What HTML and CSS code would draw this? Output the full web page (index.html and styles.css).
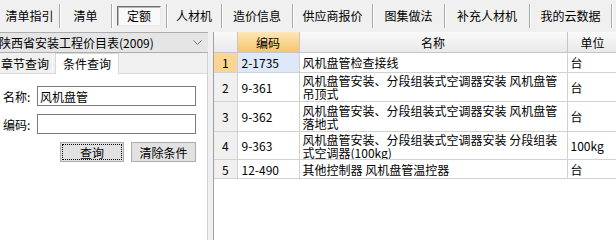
FILE: index.html
```html
<!DOCTYPE html>
<html lang="zh">
<head>
    <meta charset="UTF-8">
    <title>定额查询</title>
    <link rel="stylesheet" href="styles.css">
</head>
<body>
    <div class="toolbar">
        <div class="tool">清单指引</div>
        <div class="tool">清单</div>
        <div class="tool"><span class="pressed">定额</span></div>
        <div class="tool">人材机</div>
        <div class="tool">造价信息</div>
        <div class="tool">供应商报价</div>
        <div class="tool">图集做法</div>
        <div class="tool">补充人材机</div>
        <div class="tool">我的云数据</div>
    </div>

    <div class="main">
        <div class="side">
            <div class="combo">
                <span class="combo-text">陕西省安装工程价目表(2009)</span>
                <svg class="chevron" width="9" height="6" viewBox="0 0 9 6">
                    <polyline points="0.5,0.5 4.5,4.5 8.5,0.5" fill="none" stroke="#6d6d6d" stroke-width="1"/>
                </svg>
            </div>
            <div class="tabs">
                <div class="tab">章节查询</div>
                <div class="tab active">条件查询</div>
            </div>
            <div class="panel">
                <div class="field">
                    <label>名称:</label>
                    <input type="text" value="风机盘管">
                </div>
                <div class="field">
                    <label>编码:</label>
                    <input type="text">
                </div>
                <div class="buttons">
                    <button class="btn focused">查询</button>
                    <button class="btn">清除条件</button>
                </div>
            </div>
        </div>

        <div class="splitter"></div>

        <div class="grid">
            <table>
                <colgroup>
                    <col class="c-num">
                    <col class="c-code">
                    <col class="c-name">
                    <col class="c-unit">
                </colgroup>
                <tr class="head">
                    <th></th>
                    <th class="sorted">编码</th>
                    <th>名称</th>
                    <th>单位</th>
                </tr>
                <tr class="r1">
                    <td class="num current">1</td>
                    <td class="code selected">2-1735</td>
                    <td>风机盘管检查接线</td>
                    <td>台</td>
                </tr>
                <tr class="r2">
                    <td class="num">2</td>
                    <td class="code">9-361</td>
                    <td class="name">风机盘管安装、分段组装式空调器安装 风机盘管吊顶式</td>
                    <td>台</td>
                </tr>
                <tr class="r3">
                    <td class="num">3</td>
                    <td class="code">9-362</td>
                    <td class="name">风机盘管安装、分段组装式空调器安装 风机盘管落地式</td>
                    <td>台</td>
                </tr>
                <tr class="r4">
                    <td class="num">4</td>
                    <td class="code">9-363</td>
                    <td class="name">风机盘管安装、分段组装式空调器安装 分段组装式空调器(100kg)</td>
                    <td>100kg</td>
                </tr>
                <tr class="r5">
                    <td class="num">5</td>
                    <td class="code">12-490</td>
                    <td>其他控制器 风机盘管温控器</td>
                    <td>台</td>
                </tr>
            </table>
        </div>
    </div>
</body>
</html>
```

FILE: styles.css
```css
/* Estilos gerais */
body {
    margin: 0;
    padding: 0;
    width: 616px;
    height: 240px;
    overflow: hidden;
    font-family: "Noto Sans CJK SC", "Noto Sans", sans-serif;
    font-size: 12px;
    color: #000;
    background-color: #f0f0f0;
}

/* Barra superior */
.toolbar {
    height: 32px;
    display: grid;
    grid-template-columns: 60px 52px 55px 55px 71px 80px 72px 85px 82px;
    align-items: start;
    background-color: #f0f0f0;
}

.tool {
    margin-top: 4px;
    height: 24px;
    line-height: 24px;
    text-align: center;
    border-right: 1px solid #a8a8a8;
    box-shadow: 1px 0 0 #ffffff;
    white-space: nowrap;
}

.pressed {
    display: inline-block;
    width: 42px;
    height: 18px;
    line-height: 18px;
    margin-top: 2px;
    vertical-align: top;
    background-color: #f9f9f9;
    border: 1px solid #e8e8e8;
    border-top-color: #6e6e6e;
    border-left-color: #6e6e6e;
    box-shadow: inset 1px 1px 0 #b8b8b8;
}

/* Area principal */
.main {
    display: flex;
    height: 208px;
}

.side {
    width: 207px;
    display: flex;
    flex-direction: column;
    border-right: 1px solid #d0d0d0;
}

.combo {
    height: 19px;
    display: flex;
    align-items: center;
    justify-content: space-between;
    background-color: #e5e5e5;
    border: 1px solid #adadad;
    border-left: none;
    margin-right: -2px;
}

.combo-text {
    margin-left: -1px;
    line-height: 19px;
    white-space: nowrap;
}

.chevron {
    margin-right: 6px;
}

.tabs {
    height: 20px;
    display: flex;
    align-items: flex-end;
    border-bottom: 1px solid #d9d9d9;
}

.tab {
    height: 18px;
    line-height: 18px;
    padding: 0 3px 0 1px;
    margin-right: 2px;
    background-color: #f0f0f0;
    border-right: 1px solid #ffffff;
    white-space: nowrap;
}

.tab.active {
    height: 20px;
    line-height: 19px;
    margin-bottom: -1px;
    padding: 0 7px 0 7px;
    background-color: #ffffff;
    border: 1px solid #d9d9d9;
    border-bottom: none;
}

.panel {
    flex: 1;
    background-color: #ffffff;
    padding: 12px 11px 0 3px;
    display: flex;
    flex-direction: column;
    gap: 8px;
}

.field {
    display: flex;
    align-items: center;
}

.field label {
    width: 34px;
    white-space: nowrap;
}

.field input {
    flex: 1;
    height: 18px;
    margin: 0;
    padding: 0 2px;
    border: 1px solid #7a7a7a;
    font-family: inherit;
    font-size: 12px;
    outline: none;
}

.buttons {
    display: flex;
    justify-content: flex-end;
    gap: 7px;
}

.btn {
    height: 20px;
    margin: 0;
    padding: 0;
    font-family: inherit;
    font-size: 12px;
    line-height: 17px;
    color: #000;
    background-color: #e1e1e1;
    border: 1px solid #adadad;
}

.btn.focused {
    width: 64px;
    outline: 1px dotted #000;
    outline-offset: -3px;
}

.btn:not(.focused) {
    width: 65px;
}

.splitter {
    width: 5px;
    background-color: #f0f0f0;
}

/* Tabela */
.grid {
    flex: 1;
    background-color: #ffffff;
    border-left: 1px solid #a0a0a0;
    overflow: hidden;
}

table {
    table-layout: fixed;
    width: 404px;
    border-collapse: collapse;
}

.c-num { width: 23px; }
.c-code { width: 62px; }
.c-name { width: 268px; }
.c-unit { width: 51px; }

th, td {
    padding: 0 0 0 3px;
    border: 1px solid #d2d2d2;
    text-align: left;
    font-weight: normal;
    line-height: 13px;
    overflow: hidden;
}

tr:first-child th {
    border-top: none;
}

tr th:first-child, tr td:first-child {
    border-left: none;
}

.head th {
    height: 20px;
    text-align: center;
    padding: 0;
    background: linear-gradient(#f9f9f9, #e9e9e9);
    border-color: #c6c6c6;
}

.head th.sorted {
    background: linear-gradient(#fde6b6, #f6c46c);
}

.num {
    text-align: center;
    padding: 0;
    background-color: #f0f0f0;
}

.num.current {
    background-color: #fbd594;
}

.code.selected {
    background-color: #dde9f8;
}

.code {
    padding-left: 4px;
}

.r1 td { height: 19px; }
.r2 td { height: 28px; }
.r3 td { height: 29px; }
.r4 td { height: 27px; }
.r5 td { height: 18px; }

.name {
    line-height: 13px;
}
```
